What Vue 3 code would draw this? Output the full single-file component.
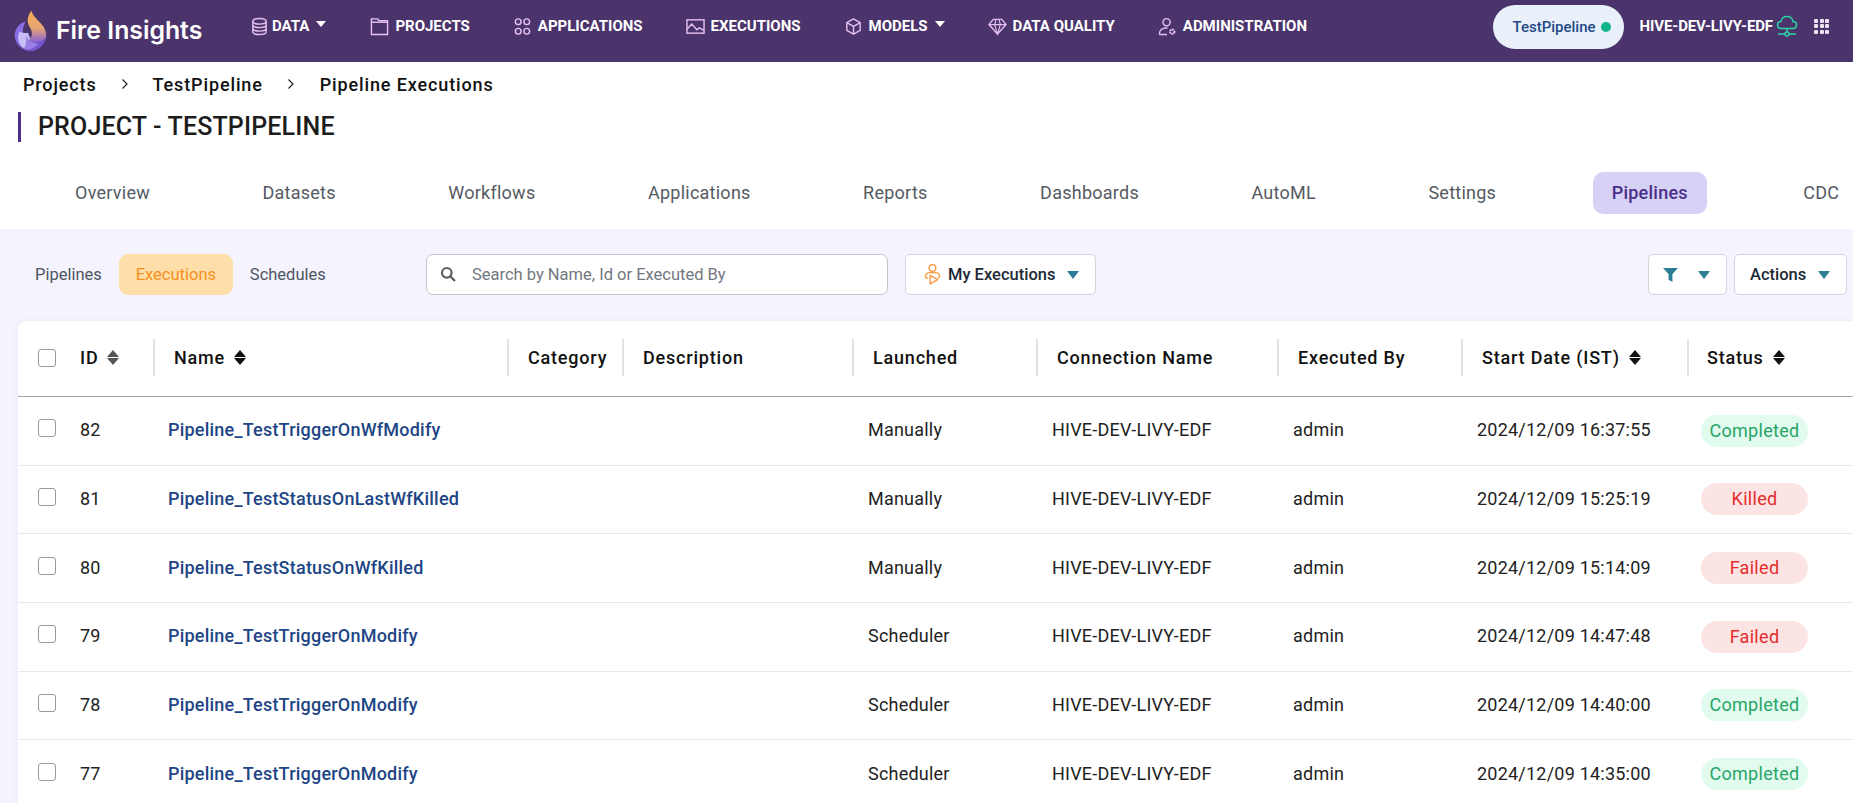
<script setup>
const navItems = [
  { label: 'DATA', icon: 'data', caret: true },
  { label: 'PROJECTS', icon: 'projects' },
  { label: 'APPLICATIONS', icon: 'apps' },
  { label: 'EXECUTIONS', icon: 'exec' },
  { label: 'MODELS', icon: 'models', caret: true },
  { label: 'DATA QUALITY', icon: 'gem' },
  { label: 'ADMINISTRATION', icon: 'admin' },
]
const tabs = ['Overview', 'Datasets', 'Workflows', 'Applications', 'Reports', 'Dashboards', 'AutoML', 'Settings', 'Pipelines', 'CDC']
const heads = [
  { label: 'ID', sort: 'grey' },
  { label: 'Name', sort: 'dark' },
  { label: 'Category' },
  { label: 'Description' },
  { label: 'Launched' },
  { label: 'Connection Name' },
  { label: 'Executed By' },
  { label: 'Start Date (IST)', sort: 'dark' },
  { label: 'Status', sort: 'dark' },
]
const rows = [
  { id: 82, name: 'Pipeline_TestTriggerOnWfModify', launched: 'Manually', date: '2024/12/09 16:37:55', status: 'Completed' },
  { id: 81, name: 'Pipeline_TestStatusOnLastWfKilled', launched: 'Manually', date: '2024/12/09 15:25:19', status: 'Killed' },
  { id: 80, name: 'Pipeline_TestStatusOnWfKilled', launched: 'Manually', date: '2024/12/09 15:14:09', status: 'Failed' },
  { id: 79, name: 'Pipeline_TestTriggerOnModify', launched: 'Scheduler', date: '2024/12/09 14:47:48', status: 'Failed' },
  { id: 78, name: 'Pipeline_TestTriggerOnModify', launched: 'Scheduler', date: '2024/12/09 14:40:00', status: 'Completed' },
  { id: 77, name: 'Pipeline_TestTriggerOnModify', launched: 'Scheduler', date: '2024/12/09 14:35:00', status: 'Completed' },
]
</script>

<template>
  <div class="page">
    <header class="nav">
      <div class="brand">
        <svg class="logo" viewBox="40 20 105 130" width="35" height="43">
          <defs>
            <linearGradient id="fl" x1="0" y1="0" x2="0" y2="1">
              <stop offset="0" stop-color="#f6ab55" />
              <stop offset="0.55" stop-color="#e6a672" />
              <stop offset="1" stop-color="#8a63d6" />
            </linearGradient>
            <linearGradient id="bl" x1="0" y1="0" x2="1" y2="1">
              <stop offset="0" stop-color="#8f78ec" />
              <stop offset="1" stop-color="#6f4cc8" />
            </linearGradient>
          </defs>
          <path d="M78 58C56 64 43 84 45 105c3 25 25 42 47 42 26 0 48-22 48-48 0 20-30 24-55 19C70 110 62 85 78 58z" fill="url(#bl)" />
          <path d="M60 88c8 4 18 6 25 4 4 12 8 22 16 24-10 14-20 20-30 22-14-10-22-30-11-50z" fill="#c9bdf5" />
          <path d="M78 100c10 14 18 22 38 26-14 14-28 18-42 16 4-14 8-28 4-42z" fill="#9a80e4" />
          <path d="M95 25C80 45 82 62 92 78c8 14 6 27-7 40 25 5 55 1 55-19 0-34-35-44-45-74z" fill="url(#fl)" />
        </svg>
        <span class="brand-name">Fire Insights</span>
      </div>
      <nav class="menu">
        <a v-for="item in navItems" :key="item.label" class="menu-item">
          <svg class="ni" viewBox="0 0 20 20" width="20" height="20" fill="none" stroke="#e6c0f0" stroke-width="1.500">
            <template v-if="item.icon === 'data'">
              <ellipse cx="10" cy="4.500" rx="7" ry="3" />
              <path d="M3 4.500v11c0 1.700 3.100 3 7 3s7-1.300 7-3v-11M3 8.200c0 1.700 3.100 3 7 3s7-1.300 7-3M3 11.900c0 1.700 3.100 3 7 3s7-1.300 7-3" />
            </template>
            <template v-else-if="item.icon === 'projects'">
              <path d="M1.500 2h6.500l1.500 2h9v14.500h-17z" />
              <path d="M1.500 5.500h17" />
            </template>
            <template v-else-if="item.icon === 'apps'">
              <circle cx="5.500" cy="5" r="3" />
              <circle cx="14.500" cy="5" r="3" />
              <circle cx="5.500" cy="15" r="3" />
              <circle cx="14.500" cy="15" r="3" />
            </template>
            <template v-else-if="item.icon === 'exec'">
              <rect x="1" y="3" width="18" height="14" />
              <path d="M1 13l5-5.500 5.500 6 2.500-2 5 2.500" />
            </template>
            <template v-else-if="item.icon === 'models'">
              <path d="M10 2l7 3.800v8.400l-7 3.800-7-3.800V5.800z" stroke-linejoin="round" />
              <path d="M3 5.800l7 4 7-4M10 9.800V18" />
            </template>
            <template v-else-if="item.icon === 'gem'">
              <path d="M5.500 2.500h9l4.500 5.500-9 10-9-10z" stroke-linejoin="round" />
              <path d="M1 8h18M7 8l3 10 3-10M7 8l1.500-5.500M13 8l-1.500-5.500" stroke-width="1.200" />
            </template>
            <template v-else>
              <circle cx="9" cy="5.500" r="3.800" />
              <path d="M1.500 18.500v-1c0-3.500 3-6 6.500-6h2M1.500 18.500h8" />
              <circle cx="15" cy="15.500" r="2.300" stroke-dasharray="1.800 .6" stroke-width="2" />
            </template>
          </svg>
          <span>{{ item.label }}</span>
          <i v-if="item.caret" class="caret"></i>
        </a>
      </nav>
      <div class="nav-right">
        <div class="pill"><span>TestPipeline</span><i class="dot"></i></div>
        <span class="conn">HIVE-DEV-LIVY-EDF</span>
        <svg class="cloud" viewBox="0 0 22 22" width="22" height="22" fill="none" stroke="#2ad4a6" stroke-width="1.500">
          <path d="M5.500 13.500C3 13.500 1.500 12 1.500 10s1.500-3.500 3.500-3.500C5.500 3.500 8 1.500 11 1.500s5.500 2 6 5c2 0 3.500 1.500 3.500 3.500s-1.500 3.500-4 3.500z" />
          <path d="M11 13.500v3M2 19h7M13 19h7" />
          <circle cx="11" cy="19" r="2" />
        </svg>
        <div class="grid-ic"><i v-for="n in 9" :key="n"></i></div>
      </div>
    </header>

    <div class="crumbs">
      <span>Projects</span>
      <svg viewBox="0 0 8 12" width="8" height="12" fill="none" stroke="#222" stroke-width="1.200"><path d="M1.500 1.500L6 6l-4.500 4.500" /></svg>
      <span>TestPipeline</span>
      <svg viewBox="0 0 8 12" width="8" height="12" fill="none" stroke="#222" stroke-width="1.200"><path d="M1.500 1.500L6 6l-4.500 4.500" /></svg>
      <span>Pipeline Executions</span>
    </div>
    <h1 class="title">PROJECT - TESTPIPELINE</h1>

    <div class="tabs">
      <a v-for="t in tabs" :key="t" class="tab" :class="{ active: t === 'Pipelines' }">{{ t }}</a>
    </div>

    <section class="panel">
      <div class="toolbar">
        <div class="subtabs">
          <a class="sub">Pipelines</a>
          <a class="sub on">Executions</a>
          <a class="sub">Schedules</a>
        </div>
        <div class="search">
          <svg viewBox="0 0 16 16" width="16" height="16" fill="none" stroke="#5c5c5c" stroke-width="2.200"><circle cx="6.800" cy="6.800" r="4.800" /><path d="M10.500 10.500L15 15" /></svg>
          <span>Search by Name, Id or Executed By</span>
        </div>
        <button class="btn mine">
          <svg viewBox="0 0 18 24" width="17" height="23" fill="none" stroke="#f79a3e" stroke-width="1.500">
            <circle cx="9" cy="5" r="3.500" />
            <path d="M4 16c-1.500 0-2.500-1-2.500-2.500S3.500 10 6 10h6c2.500 0 4.500 1.500 4.500 3.500 0 1-.8 2-2 2.300" />
            <path d="M6.500 13v9l8-4.500z" stroke-linejoin="round" />
          </svg>
          <span>My Executions</span>
          <i class="tri"></i>
        </button>
        <div class="spacer"></div>
        <button class="btn filter">
          <svg viewBox="0 0 14 14" width="15" height="15"><path d="M0 1h14L8.800 6.500V14l-3.600-2V6.500z" fill="#2e7d98" /></svg>
          <i class="tri"></i>
        </button>
        <button class="btn actions"><span>Actions</span><i class="tri"></i></button>
      </div>

      <div class="card">
        <div class="row head">
          <div class="cell c0"><i class="check"></i></div>
          <div v-for="(h, i) in heads" :key="h.label" class="cell th" :class="'c' + (i + 1)">
            <span>{{ h.label }}</span>
            <span v-if="h.sort" class="sort" :class="h.sort"><i></i><i></i></span>
          </div>
        </div>
        <div v-for="r in rows" :key="r.id" class="row body">
          <div class="cell c0"><i class="check"></i></div>
          <div class="cell c1 txt">{{ r.id }}</div>
          <div class="cell c2 txt link">{{ r.name }}</div>
          <div class="cell c3"></div>
          <div class="cell c4"></div>
          <div class="cell c5 txt">{{ r.launched }}</div>
          <div class="cell c6 txt">HIVE-DEV-LIVY-EDF</div>
          <div class="cell c7 txt">admin</div>
          <div class="cell c8 txt">{{ r.date }}</div>
          <div class="cell c9"><span class="status" :class="r.status.toLowerCase()">{{ r.status }}</span></div>
        </div>
      </div>
    </section>
  </div>
</template>

<style>
html, body { margin: 0; overflow: hidden; background: #fff; }
</style>

<style scoped>
.page {
  width: 1853px;
  height: 803px;
  overflow: hidden;
  font-family: Roboto, "Liberation Sans", sans-serif;
  color: #212121;
  background: #fff;
}
.nav {
  height: 62px;
  background: #4b346b;
  display: flex;
  align-items: flex-start;
}
.brand { display: flex; align-items: center; height: 62px; width: 250px; padding-left: 13px; box-sizing: border-box; flex: none; }
.logo { flex: none; margin-top: -2px; }
.brand-name { margin-left: 8px; margin-top: -2px; color: #fff; font-family: Inter, Roboto, sans-serif; font-size: 24.800px; font-weight: 600; white-space: nowrap; }
.menu { display: flex; height: 52px; align-items: center; flex: none; gap: 43px; }
.menu-item { display: flex; align-items: center; color: #fff; font-size: 15px; font-weight: 700; white-space: nowrap; }
.menu-item span { margin-left: 6px; }
.menu-item:first-child span { margin-left: 3px; }
.menu-item:first-child { margin-right: 1px; }
.ni { flex: none; width: 19px; height: 19px; }
.caret { width: 0; height: 0; border-left: 5.500px solid transparent; border-right: 5.500px solid transparent; border-top: 6.500px solid #fff; margin-left: 7px; margin-top: -4px; }
.nav-right { margin-left: auto; display: flex; align-items: center; height: 52px; padding-right: 24px; }
.pill { width: 131px; height: 44px; margin-top: 2px; border-radius: 22px; background: #e9f0f9; color: #1f4a86; font-size: 15px; font-weight: 500; display: flex; align-items: center; justify-content: center; gap: 5px; padding-left: 7px; box-sizing: border-box; }
.dot { width: 10px; height: 10px; border-radius: 50%; background: #10b58c; }
.conn { color: #fff; font-size: 15px; font-weight: 700; margin-left: 16px; white-space: nowrap; letter-spacing: -.1px; }
.cloud { margin-left: 3px; }
.grid-ic { display: grid; grid-template-columns: repeat(3, 4px); gap: 1.500px; margin-left: 16px; }
.grid-ic i { width: 4px; height: 4px; border-radius: 1px; background: #e9e4ef; }

.crumbs { height: 44px; display: flex; align-items: center; padding-left: 23px; font-size: 18px; font-weight: 500; letter-spacing: .87px; color: #111; }
.crumbs svg { margin: 0 24px 0 24px; }
.crumbs svg:nth-of-type(2) { margin-right: 25px; }
.title { margin: 6px 0 0 18px; height: 30px; line-height: 30px; border-left: 3px solid #4b2e8c; padding-left: 17px; font-size: 25px; font-weight: 500; letter-spacing: .16px; color: #1c1c1c; }
.tabs { display: flex; margin-top: 30px; height: 42px; align-items: center; padding-left: 75px; white-space: nowrap; gap: 112.500px; }
.tab { font-size: 18px; color: #555a62; height: 42px; line-height: 42px; border-radius: 10px; letter-spacing: .25px; }
.tab.active { background: #d6d2f5; color: #4b2e8c; font-weight: 500; padding: 0 19px; margin: 0 -16px; }
.panel { margin-top: 15px; background: #f4f3fe; height: 574px; padding-left: 18px; box-sizing: border-box; }
.toolbar { display: flex; align-items: center; height: 92px; padding-right: 6px; padding-bottom: 2px; box-sizing: border-box; }
.subtabs { display: flex; align-items: center; flex: none; width: 408px; }
.sub { font-size: 16.500px; color: #4e5560; padding: 0 17px; height: 41px; line-height: 41px; border-radius: 9px; font-weight: 400; }
.sub:first-child { padding: 0 17px 0 17px; }
.sub.on { background: #fedfa9; color: #f58f20; padding: 0; width: 114px; text-align: center; }
.search { width: 462px; height: 41px; box-sizing: border-box; border: 1px solid #c3c3c9; border-radius: 7px; background: #fff; display: flex; align-items: center; padding-left: 13px; gap: 16px; font-size: 16.500px; color: #73777f; flex: none; margin-left: 0; }
.btn { height: 41px; background: #fff; border: 1px solid #d4d5dc; border-radius: 5px; display: flex; align-items: center; font-family: inherit; font-size: 16.500px; font-weight: 500; color: #212936; padding: 0; box-sizing: border-box; flex: none; }
.tri { width: 0; height: 0; border-left: 6px solid transparent; border-right: 6px solid transparent; border-top: 8px solid #2e7d98; display: block; }
.mine { width: 191px; margin-left: 17px; padding-left: 18px; }
.mine span { margin-left: 7px; }
.mine .tri { margin-left: 12px; margin-top: 2px; }
.spacer { flex: 1; }
.filter { width: 79px; padding-left: 14px; }
.filter .tri { margin-left: 20px; margin-top: 2px; }
.actions { width: 113px; margin-left: 7px; padding-left: 15px; }
.actions .tri { margin-left: 12px; margin-top: 2px; }

.card { background: #fff; border-radius: 8px 0 0 0; box-shadow: 0 0 6px rgba(80, 70, 140, .06); }
.row { display: grid; grid-template-columns: 62px 75px 354px 115px 230px 184px 241px 184px 226px 1fr; }
.head { height: 75px; border-bottom: 1px solid #a3a8ad; box-sizing: content-box; align-items: center; }
.body { height: 68.650px; border-bottom: 1px solid #e8e9ee; box-sizing: border-box; align-items: center; font-size: 18px; letter-spacing: .22px; color: #222; }
.cell { white-space: nowrap; min-width: 0; }
.txt { padding-bottom: 2px; }
.c0 { padding-left: 20px; display: flex; }
.th { height: 37px; margin-top: -2px; display: flex; align-items: center; font-size: 18px; font-weight: 500; color: #111; letter-spacing: .8px; border-right: 2px solid #e2e2e4; box-sizing: border-box; }
.th.c9 { border-right: 0; padding-left: 18px; }
.th.c2, .th.c3, .th.c4, .th.c5, .th.c6, .th.c7, .th.c8 { padding-left: 19px; }
.body .cell:not(.c0):not(.c1) { padding-left: 14px; }
.body .cell.c2.link { padding-left: 13px; }
.check { display: block; width: 16px; height: 16px; border: 1px solid #98989e; border-radius: 3px; background: #fff; margin-top: -1px; }
.body .check { margin-top: -5px; }
.sort { display: inline-flex; flex-direction: column; gap: 1.500px; margin-left: 9px; }
.sort i { width: 0; height: 0; border-left: 6.500px solid transparent; border-right: 6.500px solid transparent; }
.sort i:first-child { border-bottom: 7.500px solid #111; }
.sort i:last-child { border-top: 7.500px solid #111; }
.sort.grey i:first-child { border-bottom-color: #555; }
.sort.grey i:last-child { border-top-color: #555; }
.link { color: #1e4585; font-weight: 500; }
.status { display: inline-block; height: 32px; line-height: 31px; border-radius: 16px; width: 107px; text-align: center; font-size: 18px; letter-spacing: .3px; }
.completed { background: #e2fbef; color: #27a569; }
.killed, .failed { background: #fde4e4; color: #e42c2c; }
.c9 .status { margin-left: -2px; }
</style>
